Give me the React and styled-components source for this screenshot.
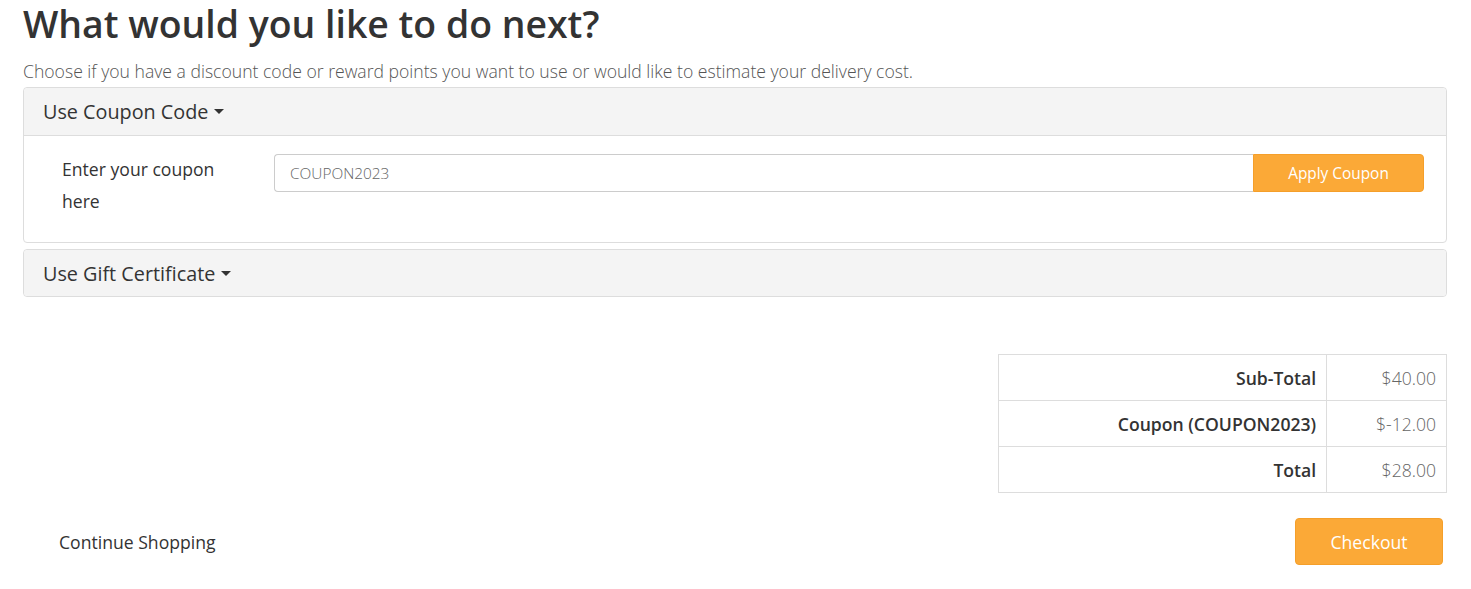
import React from "react";
import styled, { createGlobalStyle } from "styled-components";

const GlobalStyle = createGlobalStyle`
  body {
    margin: 0;
    background: #fff;
    font-family: "Open Sans", "Liberation Sans", sans-serif;
    color: #333;
  }
  * { box-sizing: border-box; }
`;

const Page = styled.div`
  padding: 0 24px 0 23px;
`;

const Title = styled.h1`
  margin: 0;
  padding-top: 4px;
  font-size: 37.4px;
  font-weight: 600;
  line-height: 40px;
  color: #333;
`;

const Lead = styled.p`
  margin: 16px 0 5px;
  font-size: 17.6px;
  font-weight: 300;
  line-height: 22px;
  color: #555;
`;

const Panel = styled.div`
  border: 1px solid #ddd;
  border-radius: 4px;
  margin-bottom: 6px;
  background: #fff;
`;

const PanelHeading = styled.div`
  display: flex;
  align-items: center;
  height: ${(p) => (p.$open ? "48px" : "46px")};
  padding: 0 19px;
  background: #f4f4f4;
  border-bottom: ${(p) => (p.$open ? "1px solid #ddd" : "none")};
  border-radius: ${(p) => (p.$open ? "4px 4px 0 0" : "4px")};
  font-size: 19.8px;
  color: #333;
`;

const Caret = styled.span`
  display: inline-block;
  margin-left: 6px;
  width: 0;
  height: 0;
  border-left: 5px solid transparent;
  border-right: 5px solid transparent;
  border-top: 5px solid #333;
`;

const PanelBody = styled.div`
  display: flex;
  align-items: flex-start;
  padding: 17px 22px 25px 14px;
`;

const Label = styled.label`
  width: 236px;
  flex-shrink: 0;
  padding: 0 36px 0 24px;
  font-size: 17.6px;
  line-height: 32px;
  color: #333;
`;

const InputGroup = styled.div`
  flex: 1;
  display: flex;
  margin-top: 1px;
`;

const Input = styled.input`
  flex: 1;
  height: 38px;
  border: 1px solid #ccc;
  border-right: none;
  border-radius: 4px 0 0 4px;
  padding: 0 15px;
  font-family: inherit;
  font-size: 15.4px;
  font-weight: 300;
  color: #666;
  outline: none;
`;

const OrangeButton = styled.button`
  background: #fba937;
  border: 1px solid #f59f2a;
  color: #fff;
  font-family: inherit;
  cursor: pointer;
  font-size: ${(p) => (p.$large ? "17.6px" : "15.4px")};
  height: ${(p) => (p.$large ? "47px" : "38px")};
  width: ${(p) => (p.$large ? "148px" : "171px")};
  border-radius: ${(p) => (p.$large ? "4px" : "0 4px 4px 0")};
`;

const TotalsWrap = styled.div`
  display: flex;
  justify-content: flex-end;
  margin-top: 57px;
`;

const Totals = styled.table`
  width: 449px;
  border-collapse: collapse;
  font-size: 17.6px;
`;

const Cell = styled.td`
  height: 46px;
  padding: 0 10px;
  border: 1px solid #ddd;
  text-align: right;
  line-height: 22px;
  font-weight: ${(p) => (p.$label ? 600 : 300)};
  color: ${(p) => (p.$label ? "#333" : "#666")};
  width: ${(p) => (p.$label ? "329px" : "120px")};
`;

const Actions = styled.div`
  display: flex;
  justify-content: space-between;
  align-items: center;
  margin-top: 25px;
  padding: 0 4px 0 36px;
`;

const TextLink = styled.a`
  font-size: 17.6px;
  color: #333;
  text-decoration: none;
`;

const rows = [
  ["Sub-Total", "$40.00"],
  ["Coupon (COUPON2023)", "$-12.00"],
  ["Total", "$28.00"],
];

export default function App() {
  return (
    <Page>
      <GlobalStyle />
      <Title>What would you like to do next?</Title>
      <Lead>
        Choose if you have a discount code or reward points you want to use or
        would like to estimate your delivery cost.
      </Lead>
      <Panel>
        <PanelHeading $open>
          Use Coupon Code <Caret />
        </PanelHeading>
        <PanelBody>
          <Label>Enter your coupon here</Label>
          <InputGroup>
            <Input defaultValue="COUPON2023" />
            <OrangeButton>Apply Coupon</OrangeButton>
          </InputGroup>
        </PanelBody>
      </Panel>
      <Panel>
        <PanelHeading>
          Use Gift Certificate <Caret />
        </PanelHeading>
      </Panel>
      <TotalsWrap>
        <Totals>
          <tbody>
            {rows.map(([k, v]) => (
              <tr key={k}>
                <Cell $label>{k}</Cell>
                <Cell>{v}</Cell>
              </tr>
            ))}
          </tbody>
        </Totals>
      </TotalsWrap>
      <Actions>
        <TextLink href="#">Continue Shopping</TextLink>
        <OrangeButton $large>Checkout</OrangeButton>
      </Actions>
    </Page>
  );
}
